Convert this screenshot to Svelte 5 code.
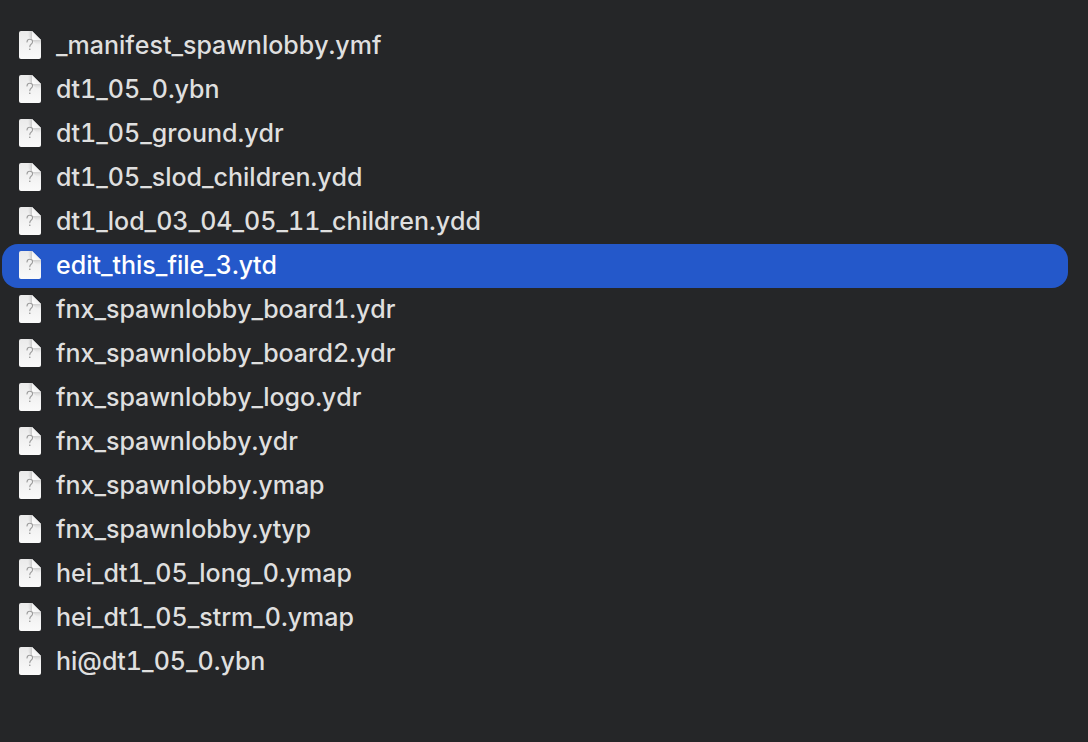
<script>
    const files = [
        "_manifest_spawnlobby.ymf",
        "dt1_05_0.ybn",
        "dt1_05_ground.ydr",
        "dt1_05_slod_children.ydd",
        "dt1_lod_03_04_05_11_children.ydd",
        "edit_this_file_3.ytd",
        "fnx_spawnlobby_board1.ydr",
        "fnx_spawnlobby_board2.ydr",
        "fnx_spawnlobby_logo.ydr",
        "fnx_spawnlobby.ydr",
        "fnx_spawnlobby.ymap",
        "fnx_spawnlobby.ytyp",
        "hei_dt1_05_long_0.ymap",
        "hei_dt1_05_strm_0.ymap",
        "hi@dt1_05_0.ybn",
    ];

    let selected = $state("edit_this_file_3.ytd");
</script>

<!-- gradients shared by every file icon -->
<svg class="defs" width="0" height="0" aria-hidden="true">
    <defs>
        <linearGradient id="page" x1="0" y1="0" x2="0" y2="1">
            <stop offset="0" stop-color="#eaeaea" />
            <stop offset="1" stop-color="#fafafa" />
        </linearGradient>
        <linearGradient id="shade" x1="0" y1="0" x2="1" y2="0">
            <stop offset="0" stop-color="#d0d0d0" stop-opacity="0" />
            <stop offset="1" stop-color="#c8c8c8" />
        </linearGradient>
        <linearGradient id="under" x1="0" y1="0" x2="0" y2="1">
            <stop offset="0" stop-color="#cecece" />
            <stop offset="1" stop-color="#e0e0e0" stop-opacity="0" />
        </linearGradient>
        <linearGradient id="fold" x1="0" y1="1" x2="1" y2="0">
            <stop offset="0" stop-color="#ffffff" />
            <stop offset="0.6" stop-color="#eeeeee" />
        </linearGradient>
    </defs>
</svg>

<ul class="files">
    {#each files as file}
        <li>
            <button class="file" class:active={file == selected} aria-pressed={file == selected} onclick={() => (selected = file)}>
                <svg class="icon" viewBox="0 0 22 28" aria-hidden="true">
                    <path fill="url(#page)" d="M2 0H13L22 9V26Q22 28 20 28H2Q0 28 0 26V2Q0 0 2 0Z" />
                    <path fill="url(#shade)" d="M9 0H13V9L9 5Z" />
                    <path fill="url(#under)" d="M13 9H22V14H18Z" />
                    <path fill="url(#fold)" d="M13 0L22 9H15Q13 9 13 7Z" />
                    <path class="mark" d="M8 11Q8.2 8.2 10.8 8.2Q13.6 8.2 13.6 10.8Q13.6 12.2 12.1 13.2Q10.8 14.1 10.8 15.8" />
                    <circle cx="10.8" cy="18.3" r="0.8" fill="#909090" />
                </svg>
                <span>{file}</span>
            </button>
        </li>
    {/each}
</ul>

<style>
    :global(body) {
        background: #252628;
        font-family: Inter, "Liberation Sans", sans-serif;
    }

    .defs {
        position: absolute;
    }

    .files {
        list-style: none;
        margin: 0;
        padding: 24px 20px 24px 2px;
    }

    .file {
        display: flex;
        align-items: center;
        gap: 15px;
        width: 100%;
        height: 44px;
        padding: 0 17px 2px;
        border: none;
        border-radius: 16px;
        background: none;
        color: #dfdfdf;
        font-family: inherit;
        font-size: 25px;
        font-weight: 500;
        font-kerning: none;
        font-variant-numeric: tabular-nums;
        line-height: 32px;
        text-align: left;
        white-space: nowrap;
    }

    .file.active {
        background: #2458ca;
        color: #ffffff;
    }

    .icon {
        flex: none;
        width: 22px;
        height: 28px;
    }

    .mark {
        fill: none;
        stroke: #9c9c9c;
        stroke-width: 1.1;
        stroke-linecap: round;
    }
</style>
